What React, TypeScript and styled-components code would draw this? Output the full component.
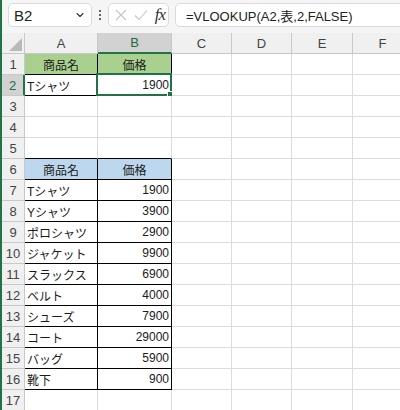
import styled, { createGlobalStyle } from "styled-components";
import { ChevronDown } from "lucide-react";

const GlobalStyle = createGlobalStyle`
  html, body {
    margin: 0;
    padding: 0;
    background: #ffffff;
  }
  body {
    font-family: "Liberation Sans", "Noto Sans CJK JP", sans-serif;
  }
`;

const Window = styled.div`
  width: 400px;
  height: 410px;
  overflow: hidden;
  border-left: 2px solid #217346;
  box-sizing: border-box;
  background: #f5f5f5;

  display: flex;
  flex-direction: column;
`;

// FORMULA BAR
const FormulaBar = styled.div`
  height: 33px;
  flex-shrink: 0;
  box-sizing: border-box;
  padding: 3px 0 6px 6px;

  display: flex;
  align-items: stretch;
  gap: 6px;
`;

const Field = styled.div<{ $width?: number; $grow?: boolean }>`
  ${(p) => (p.$width ? `width: ${p.$width}px;` : "")}
  ${(p) => (p.$grow ? "flex: 1; margin-right: -20px;" : "flex-shrink: 0;")}
  box-sizing: border-box;
  background: #ffffff;
  border: 1px solid #dadada;
  border-radius: 5px;

  display: flex;
  align-items: center;
`;

const NameText = styled.span`
  flex: 1;
  padding-left: 5px;
  font-size: 15px;
  color: #222;
`;

const Chevron = styled.span`
  display: flex;
  padding-right: 5px;
  color: #333;
`;

const Dots = styled.div`
  width: 4px;
  display: flex;
  flex-direction: column;
  justify-content: center;
  align-items: center;
  gap: 2px;

  span {
    width: 2px;
    height: 2px;
    background: #333;
    border-radius: 1px;
  }
`;

const ActionIcons = styled.div`
  flex: 1;
  padding: 0 3px 0 6px;
  display: flex;
  align-items: center;
  justify-content: space-between;
`;

const Fx = styled.span`
  font-family: "Liberation Serif", serif;
  font-style: italic;
  font-size: 17px;
  color: #333;
  letter-spacing: -1px;
`;

const FormulaText = styled.span`
  padding-left: 10px;
  font-size: 13px;
  color: #222;
  white-space: nowrap;
`;

// SHEET GRID
const Sheet = styled.div`
  flex: 1;
  background: #ffffff;
  display: grid;
  grid-template-columns: 23px 73px 74px 60px 60px 61px 60px;
  grid-auto-rows: 21px;
  align-content: start;
`;

const HeadCell = styled.div<{ $selected?: boolean; $row?: boolean }>`
  box-sizing: border-box;
  background: ${(p) => (p.$selected ? "#d2d2d2" : "#f0f0f0")};
  color: ${(p) => (p.$selected ? "#1d6b3f" : "#444")};
  font-size: 13px;
  border-right: ${(p) =>
    p.$selected && p.$row ? "2px solid #217346" : "1px solid #c8c8c8"};
  border-bottom: ${(p) =>
    p.$selected && !p.$row ? "2px solid #217346" : "1px solid #c8c8c8"};

  display: flex;
  align-items: center;
  justify-content: center;
`;

const Corner = styled(HeadCell)`
  position: relative;
  align-items: flex-end;
  justify-content: flex-end;
  padding: 0 2px 2px 0;
`;

const Cell = styled.div<{
  $fill?: string;
  $align?: string;
  $right?: boolean;
  $bottom?: boolean;
}>`
  position: relative;
  box-sizing: border-box;
  background: ${(p) => p.$fill || "#ffffff"};
  border-right: 1px solid ${(p) => (p.$right ? "#000" : "#dcdcdc")};
  border-bottom: 1px solid ${(p) => (p.$bottom ? "#000" : "#dcdcdc")};
  padding: 0 2px;
  font-size: 12px;
  color: #1a1a1a;
  white-space: nowrap;

  display: flex;
  align-items: center;
  justify-content: ${(p) => p.$align || "flex-start"};
`;

const Selection = styled.div`
  position: absolute;
  left: -2px;
  top: -2px;
  right: -1px;
  bottom: -1px;
  border: 2px solid #217346;
  pointer-events: none;

  &::after {
    content: "";
    position: absolute;
    right: -4px;
    bottom: -4px;
    width: 5px;
    height: 5px;
    background: #217346;
    border: 1px solid #fff;
  }
`;

type Row = { a?: string; b?: string; fill?: string; head?: boolean };

const GREEN = "#a9d08e";
const BLUE = "#bdd7ee";

const rows: Row[] = [
  { a: "商品名", b: "価格", fill: GREEN, head: true },
  { a: "Tシャツ", b: "1900" },
  {},
  {},
  {},
  { a: "商品名", b: "価格", fill: BLUE, head: true },
  { a: "Tシャツ", b: "1900" },
  { a: "Yシャツ", b: "3900" },
  { a: "ポロシャツ", b: "2900" },
  { a: "ジャケット", b: "9900" },
  { a: "スラックス", b: "6900" },
  { a: "ベルト", b: "4000" },
  { a: "シューズ", b: "7900" },
  { a: "コート", b: "29000" },
  { a: "バッグ", b: "5900" },
  { a: "靴下", b: "900" },
  {},
];

const columns = ["A", "B", "C", "D", "E", "F"];

// rows that belong to the two bordered tables (1-based)
const boxed = (r: number) => (r >= 1 && r <= 2) || (r >= 6 && r <= 16);

export default function App() {
  return (
    <>
      <GlobalStyle />
      <Window>
        <FormulaBar>
          <Field $width={84}>
            <NameText>B2</NameText>
            <Chevron>
              <ChevronDown size={12} strokeWidth={2.2} />
            </Chevron>
          </Field>
          <Dots>
            <span />
            <span />
            <span />
          </Dots>
          <Field $width={61}>
            <ActionIcons>
              <svg width="12" height="12" viewBox="0 0 12 12">
                <path d="M1 1 L11 11 M11 1 L1 11" stroke="#c4c4c4" strokeWidth="1.1" fill="none" />
              </svg>
              <svg width="14" height="12" viewBox="0 0 14 12">
                <path d="M1 6.5 L5 10.5 L13 1.5" stroke="#c4c4c4" strokeWidth="1.1" fill="none" />
              </svg>
              <Fx>fx</Fx>
            </ActionIcons>
          </Field>
          <Field $grow>
            <FormulaText>=VLOOKUP(A2,表,2,FALSE)</FormulaText>
          </Field>
        </FormulaBar>

        <Sheet>
          <Corner>
            <svg width="13" height="13" viewBox="0 0 13 13">
              <path d="M13 0 L13 13 L0 13 Z" fill="#b9b9b9" />
            </svg>
          </Corner>
          {columns.map((c) => (
            <HeadCell key={c} $selected={c === "B"}>
              {c}
            </HeadCell>
          ))}

          {rows.map((row, i) => {
            const r = i + 1;
            const inBox = boxed(r);
            const bottom = inBox || boxed(r + 1);
            return [
              <HeadCell key={`h${r}`} $row $selected={r === 2}>
                {r}
              </HeadCell>,
              <Cell
                key={`a${r}`}
                $fill={row.fill}
                $align={row.head ? "center" : "flex-start"}
                $right={inBox}
                $bottom={bottom}
              >
                {row.a}
              </Cell>,
              <Cell
                key={`b${r}`}
                $fill={row.fill}
                $align={row.head ? "center" : "flex-end"}
                $right={inBox}
                $bottom={bottom}
              >
                {row.b}
                {r === 2 && <Selection />}
              </Cell>,
              ...columns.slice(2).map((c) => <Cell key={`${c}${r}`} />),
            ];
          })}
        </Sheet>
      </Window>
    </>
  );
}
